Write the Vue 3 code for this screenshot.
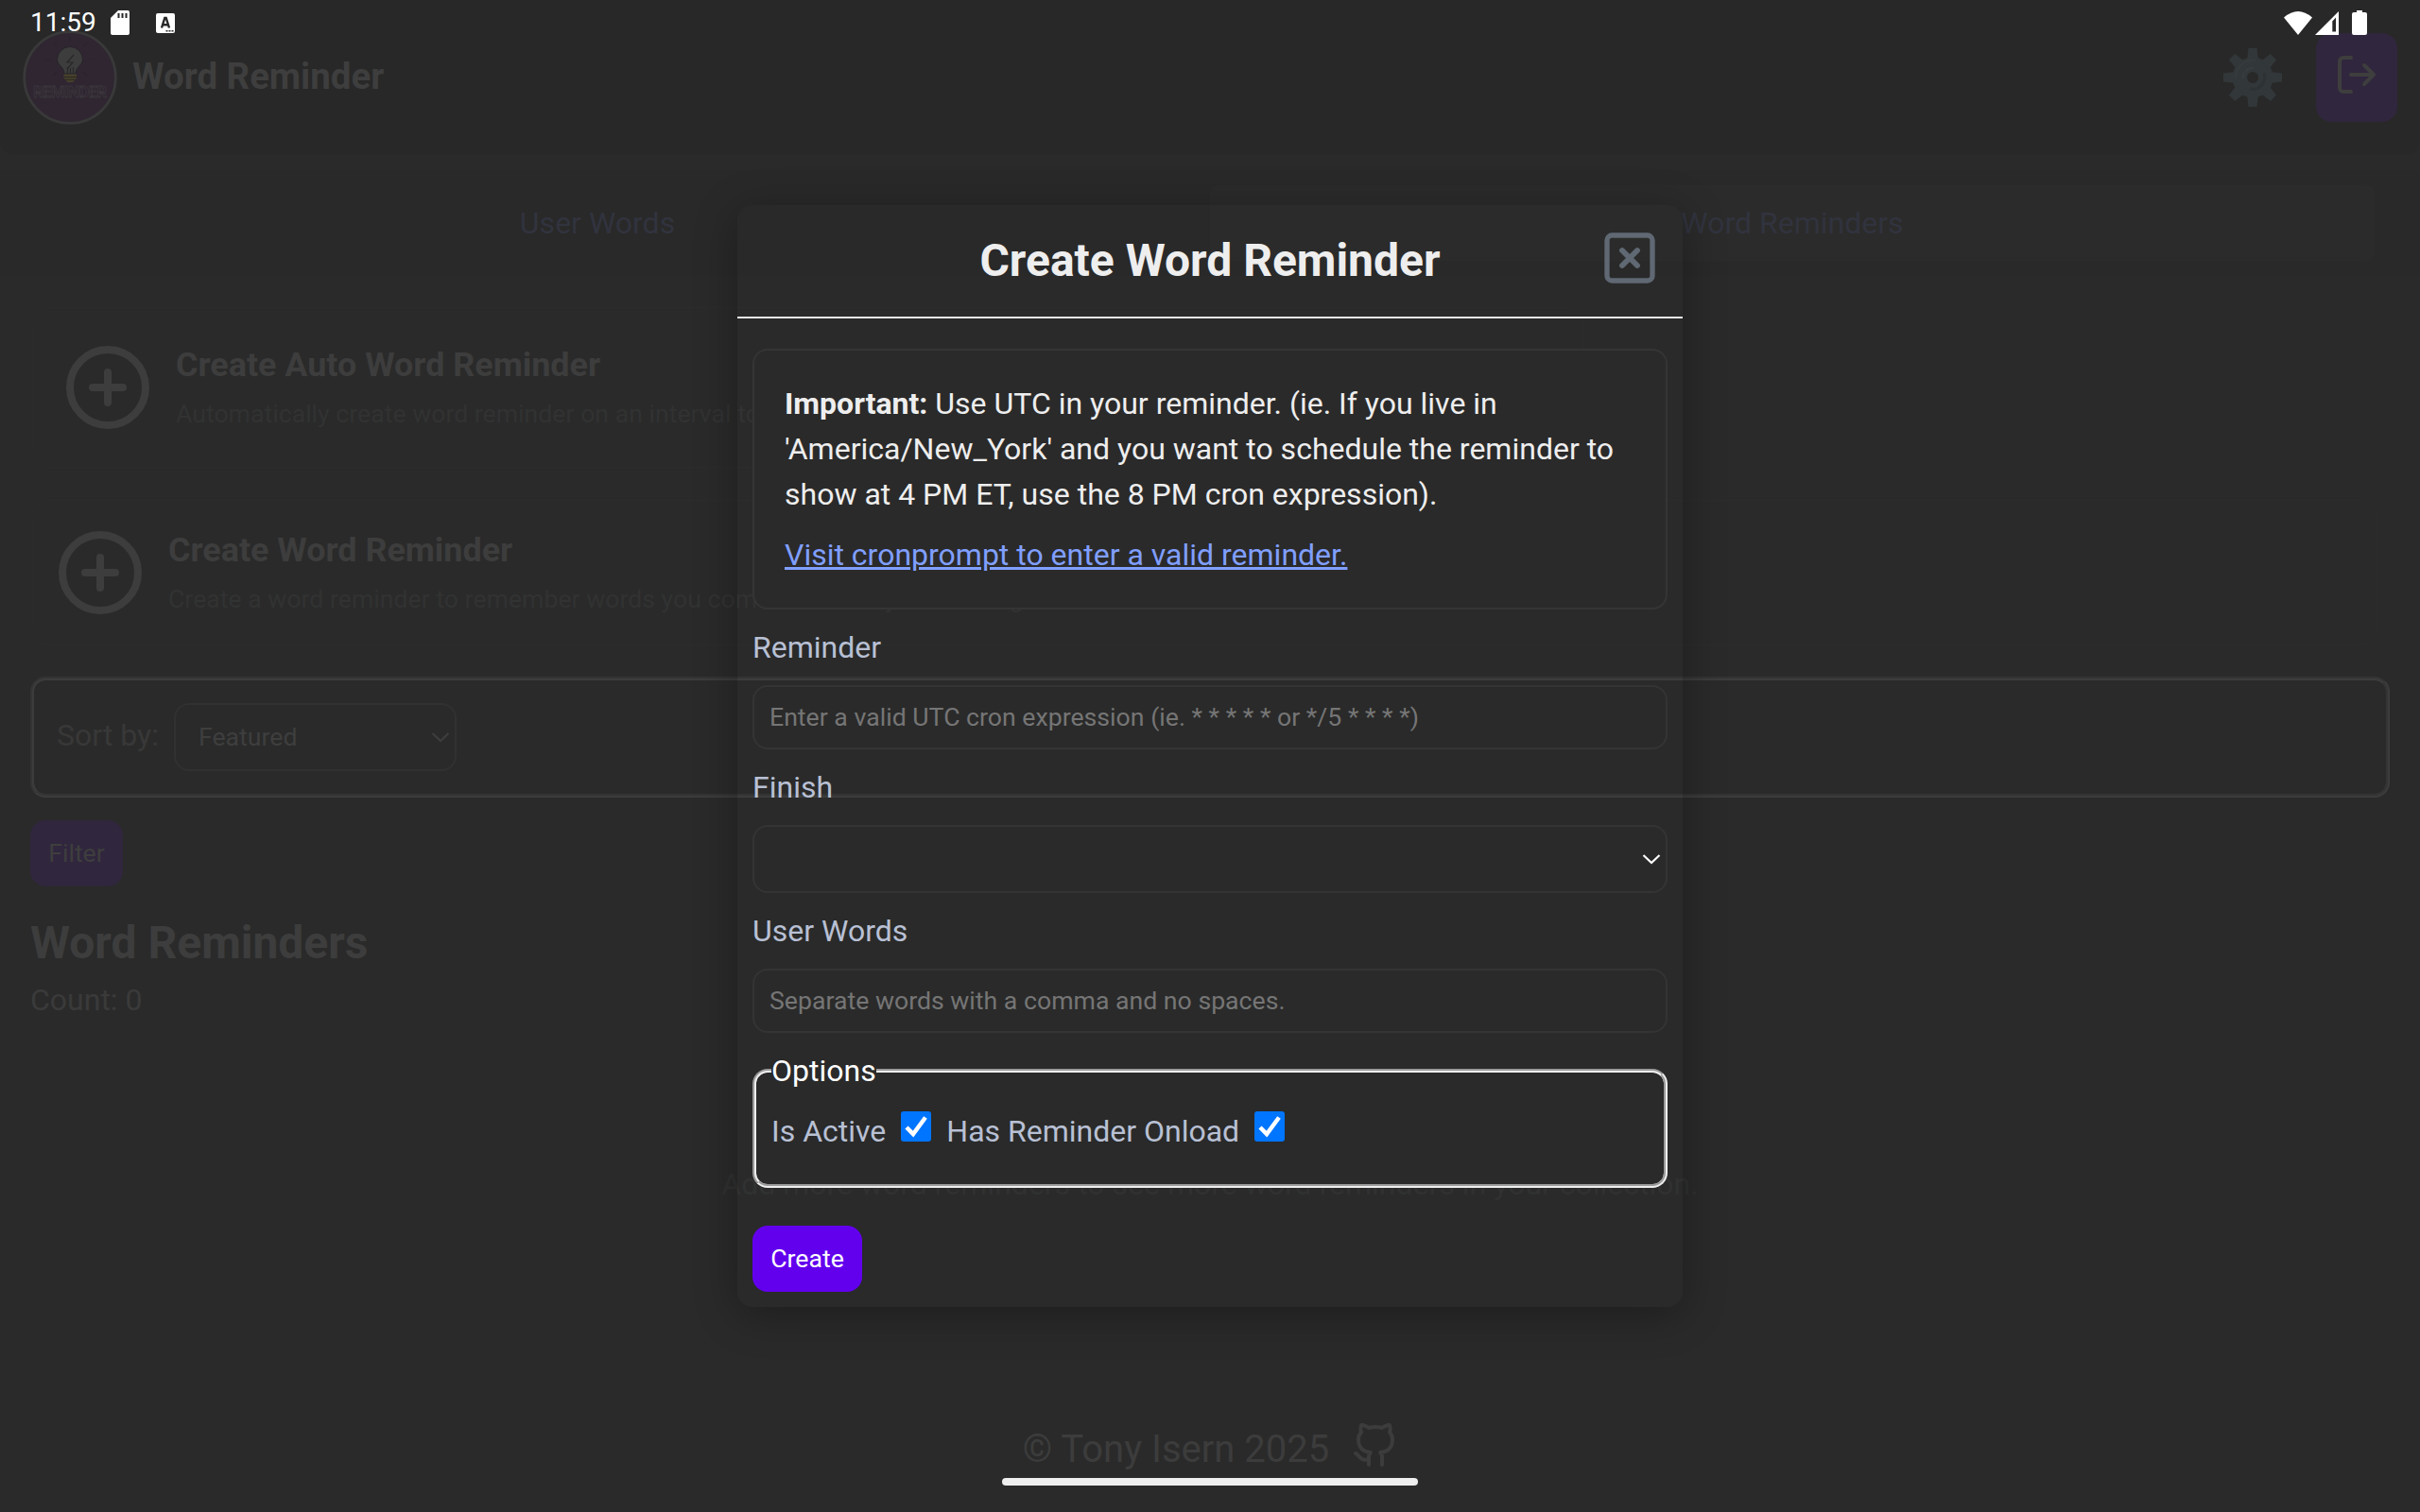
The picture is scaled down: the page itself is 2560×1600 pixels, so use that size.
<script setup>
const cards = [
  { title: 'Create Auto Word Reminder', text: 'Automatically create word reminder on an interval to', auto: true },
  { title: 'Create Word Reminder', text: 'Create a word reminder to remember words you come across in your reading.', auto: false }
]
const tabs = [
  { label: 'User Words', active: false },
  { label: 'Word Reminders', active: true }
]
</script>

<template>
  <div class="screen">
    <div class="page">
      <header class="header">
        <svg class="logo" viewBox="0 0 100 100">
          <circle cx="50" cy="50" r="48.300" fill="#2f2632" stroke="#393939" stroke-width="2.800" />
          <path d="M31 31h-7M69 31h7M36 17l-4-4M64 17l4-4M36 44l-4 4M64 44l4 4M50 12V7" stroke="#2a232d" stroke-width="1.200" />
          <path d="M44 46c0-7-7.500-9-7.500-15a13.500 13.500 0 0 1 27 0c0 6-7.500 8-7.500 15z" fill="#3d3d3d" stroke="#262328" />
          <path d="M54 26l-7 8h6l-6 7M47.500 46v-7M50.500 46v-6M53.500 46v-7" fill="none" stroke="#282828" stroke-width="1.200" />
          <path d="M43.500 46.500h13.500v4l-4 4.500h-5.500l-4-4.500z" fill="#46402c" />
          <path d="M43.500 49.500h13.500M45 52.300h10.500" stroke="#2b2820" />
          <text x="50" y="70.500" text-anchor="middle" textLength="78" fill="#2f2632" stroke="#3b363c" stroke-width=".8">REMINDER</text>
        </svg>
        <span class="brand">Word Reminder</span>
        <svg class="gear" viewBox="-31 -31 62 62">
          <g fill="#323739">
            <circle r="21.500" />
            <path v-for="i in 8" :key="i" :transform="`rotate(${i * 45})`" d="M-6-18L-4.500-31H4.500L6-18z" />
          </g>
          <path d="M-18 0A18 18 0 0 1 3-18" fill="none" stroke="#353b3d" stroke-width="3" />
          <path d="M12 -5A13 13 0 0 1 -3 12" fill="none" stroke="#2d3234" stroke-width="3" />
          <path d="M-10 1A10 10 0 0 1 1-10" fill="none" stroke="#373d3f" stroke-width="2" />
          <circle r="6" fill="#282828" />
        </svg>
        <div class="logout">
          <svg class="line" viewBox="0 0 24 24"><path d="M9 21H5a2 2 0 0 1-2-2V5a2 2 0 0 1 2-2h4M16 17l5-5-5-5M21 12H9" /></svg>
        </div>
      </header>

      <nav class="nav">
        <div v-for="t in tabs" :key="t.label" class="tab" :class="{ active: t.active }">{{ t.label }}</div>
      </nav>

      <section class="cards">
        <div v-for="c in cards" :key="c.title" class="card" :class="{ auto: c.auto }">
          <svg class="line plus" viewBox="0 0 24 24"><circle cx="12" cy="12" r="10" /><path d="M12 8v8M8 12h8" /></svg>
          <div>
            <div class="card-title">{{ c.title }}</div>
            <div class="card-text">{{ c.text }}</div>
          </div>
        </div>
      </section>

      <div class="sort">
        <span>Sort by:</span>
        <div class="sort-select">Featured<svg class="chev" viewBox="0 0 20 12"><path d="M1.500 2l8.500 8 8.500-8" /></svg></div>
      </div>
      <div class="btn filter">Filter</div>
      <div class="h2">Word Reminders</div>
      <div class="count">Count: 0</div>
      <div class="more">Add more word reminders to see more word reminders in your collection.</div>
      <footer class="footer">
        <span>© Tony Isern 2025</span>
        <svg class="line" viewBox="0 0 24 24"><path d="M9 19c-5 1.500-5-2.500-7-3m14 6v-3.870a3.370 3.370 0 0 0-.94-2.610c3.140-.35 6.440-1.540 6.440-7A5.440 5.440 0 0 0 20 4.770 5.070 5.070 0 0 0 19.910 1S18.730.65 16 2.480a13.380 13.380 0 0 0-7 0C6.270.65 5.090 1 5.090 1A5.070 5.070 0 0 0 5 4.770a5.440 5.440 0 0 0-1.500 3.780c0 5.420 3.300 6.610 6.440 7A3.370 3.370 0 0 0 9 18.130V22" /></svg>
      </footer>
    </div>

    <div class="modal">
      <div class="modal-head">
        <span>Create Word Reminder</span>
        <svg class="line close" viewBox="0 0 24 24"><rect x="3" y="3" width="18" height="18" rx="2" /><path d="M9 9l6 6M15 9l-6 6" stroke-width="2.200" /></svg>
      </div>
      <div class="modal-body">
        <div class="note">
          <p><b>Important:</b> Use UTC in your reminder. (ie. If you live in 'America/New_York' and you want to schedule the reminder to show at 4 PM ET, use the 8 PM cron expression).</p>
          <a>Visit cronprompt to enter a valid reminder.</a>
        </div>
        <label>Reminder</label>
        <div class="field">Enter a valid UTC cron expression (ie. * * * * * or */5 * * * *)</div>
        <label>Finish</label>
        <div class="field select"><svg class="chev" viewBox="0 0 20 12"><path d="M1.500 2l8.500 8 8.500-8" /></svg></div>
        <label>User Words</label>
        <div class="field">Separate words with a comma and no spaces.</div>
        <fieldset class="options">
          <legend>Options</legend>
          <div class="checks">
            <span>Is Active</span>
            <svg class="check" viewBox="0 0 32 32"><rect width="32" height="32" rx="3" /><path d="M6 17l7 7L26 6.500" /></svg>
            <span>Has Reminder Onload</span>
            <svg class="check" viewBox="0 0 32 32"><rect width="32" height="32" rx="3" /><path d="M6 17l7 7L26 6.500" /></svg>
          </div>
        </fieldset>
        <div class="btn create">Create</div>
      </div>
    </div>

    <div class="status">
      <span class="time">11:59</span>
      <svg class="sd" viewBox="0 0 20 26"><path d="M8 0h10a2 2 0 0 1 2 2v22a2 2 0 0 1-2 2H2a2 2 0 0 1-2-2V8z" fill="#fff" /><path d="M8.500 3v5M12.500 3v5M16.500 3v5" stroke="#282828" stroke-width="2" /></svg>
      <svg class="kb" viewBox="0 0 20 21"><rect width="20" height="21" rx="2" fill="#fff" /><path d="M6 15.500L9.300 5h1.400L14 15.500M7.300 12.300h5.400" fill="none" stroke="#282828" stroke-width="2.400" /><path d="M10.500 18.800h8" stroke="#282828" stroke-width="1.600" stroke-dasharray="2 1" /></svg>
      <svg class="wifi" viewBox="0 0 30 25"><path d="M0 6.500Q15-6.500 30 6.500L15 25z" fill="#fff" /></svg>
      <svg class="signal" viewBox="0 0 25 26"><path d="M0 26L25 1v25z" fill="#fff" /><path d="M18.300 11.500L22 7.500v15h-3.700z" fill="#282828" /></svg>
      <svg class="batt" viewBox="0 0 16 26"><path d="M5 0h6v2h3a2 2 0 0 1 2 2v20a2 2 0 0 1-2 2H2a2 2 0 0 1-2-2V4a2 2 0 0 1 2-2h3z" fill="#fff" /></svg>
    </div>
    <div class="pill"></div>
  </div>
</template>

<style>
body { background: #2a2a2a; overflow: hidden; }
</style>

<style scoped>
* { box-sizing: border-box; }
.screen { position: relative; width: 2560px; height: 1600px; overflow: hidden; background: #2a2a2a; font-family: Roboto, sans-serif; font-size: 32px; line-height: 48px; }
.page { height: 1600px; display: flex; flex-direction: column; }
svg { display: block; flex: none; }
.line { fill: none; stroke: currentColor; stroke-width: 2; stroke-linecap: round; stroke-linejoin: round; }

.header { height: 164px; padding: 0 24px; display: flex; align-items: center; background: #282828; border-radius: 0 0 16px 16px; }
.logo { width: 100px; height: 100px; }
.logo text { font: 700 16.500px Roboto, sans-serif; }
.brand { margin-left: 16px; margin-top: -2px; font-size: 38.400px; font-weight: 700; color: #3e3e3e; }
.gear { width: 62px; height: 62px; margin-left: auto; }
.logout { width: 86px; height: 94px; margin-left: 36px; border-radius: 16px; background: #30263d; color: #3e3e3e; display: flex; justify-content: center; padding-top: 20px; }
.logout svg { width: 48px; height: 48px; }

.nav { height: 112px; margin-top: 16px; padding: 16px 48px 16px 16px; display: flex; gap: 32px; background: #292929; }
.tab { flex: 1; display: flex; align-items: center; justify-content: center; color: #31333e; border-radius: 8px; }
.tab.active { background: #2b2b2b; }

.cards { padding: 33px 32px 0 35px; display: flex; flex-direction: column; gap: 34px; }
.card { height: 154px; width: 2480px; padding: 28px 22px; display: flex; gap: 24px; border: 1px solid #2c2c2c; border-radius: 16px; white-space: nowrap; }
.card.auto { height: 170px; width: 1640px; padding: 36px 30px; }
.plus { width: 96px; height: 96px; color: #3d3d3d; }
.card-title { font-size: 35.900px; font-weight: 700; color: #3d3d3d; }
.card-text { margin-top: 4px; font-size: 26.667px; color: #313232; }

.sort { position: relative; height: 128px; margin: 33px 32px 0; padding: 24px; display: flex; align-items: flex-start; gap: 16px; border: 4px solid transparent; color: #383838; }
.sort::before { content: ""; position: absolute; inset: -4px; border: 4px groove #eee; border-radius: 16px; opacity: .09; }
.sort > span { margin-top: 10px; }
.sort-select { width: 299px; height: 72px; padding: 0 5px 0 24px; display: flex; align-items: center; justify-content: space-between; border: 2px solid #313131; border-radius: 16px; font-size: 26.667px; color: #3e3e3e; }
.chev { width: 20px; height: 12px; fill: none; stroke: currentColor; stroke-width: 2.200; }
.btn { height: 70px; border-radius: 16px; display: flex; align-items: center; justify-content: center; font-size: 26.667px; }
.filter { width: 98px; margin: 24px 0 0 32px; background: #30263d; color: #3e3e3e; }
.h2 { margin: 36px 0 0 32px; font-size: 48px; font-weight: 700; color: #3d3d3d; }
.count { margin: 12px 0 0 32px; color: #3a3a3a; }
.more { margin-top: 147px; text-align: center; color: #303131; }
.footer { height: 48px; margin-top: 233px; display: flex; justify-content: center; align-items: flex-start; gap: 24px; font-size: 40px; color: #3c3c3c; }
.footer svg { width: 48px; height: 48px; margin-top: -4px; }

.modal { position: absolute; left: 780px; top: 217px; width: 1000px; height: 1166px; border-radius: 16px; box-shadow: 0 8px 46px rgba(0, 0, 0, .3); color: #eee; }
.modal-head { position: relative; height: 120px; border-bottom: 2px solid #e8e8e8; display: flex; align-items: center; justify-content: center; font-size: 48px; font-weight: 700; }
.close { position: absolute; right: 24px; top: 24px; width: 64px; height: 64px; color: #5f6873; }
.modal-body { padding: 32px 16px 16px; }
.note { padding: 32px; border: 2px solid #353535; border-radius: 16px; background: #2a2a2a; }
.note p { margin: 0 0 16px; }
.note a { display: block; color: #809fff; text-decoration: underline; }
label { display: block; margin: 16px 0; color: #b8c0d4; }
.field { height: 68px; padding: 0 16px; border: 2px solid #343434; border-radius: 16px; background: #2a2a2a; display: flex; align-items: center; font-size: 26.667px; color: #757575; }
.field.select { height: 72px; padding: 0 5px; justify-content: flex-end; color: #fff; }
.options { margin: 16px 0 0; height: 148px; padding: 0 16px; border: 4px groove #eee; border-radius: 16px; background: #2a2a2a; }
legend { padding: 0; color: #fff; }
.checks { display: flex; margin-top: 16px; color: #b8c0d4; }
.check { width: 32px; height: 32px; margin: 3px 16px 0; fill: #0075ff; }
.check path { fill: none; stroke: #fff; stroke-width: 4.500; }
.create { width: 116px; margin-top: 40px; background: #6200ee; color: #fff; }

.status { position: absolute; left: 0; top: 0; width: 2560px; height: 48px; padding: 0 56px 0 32px; display: flex; align-items: center; color: #fff; }
.time { font-size: 28px; }
.sd { width: 20px; height: 26px; margin-left: 15px; }
.kb { width: 20px; height: 21px; margin-left: 28px; }
.wifi { width: 30px; height: 25px; margin-left: auto; }
.signal { width: 25px; height: 26px; margin-left: 3px; }
.batt { width: 16px; height: 26px; margin-left: 14px; }
.pill { position: absolute; left: 1060px; top: 1564px; width: 440px; height: 8px; border-radius: 4px; background: #eee; }
</style>
